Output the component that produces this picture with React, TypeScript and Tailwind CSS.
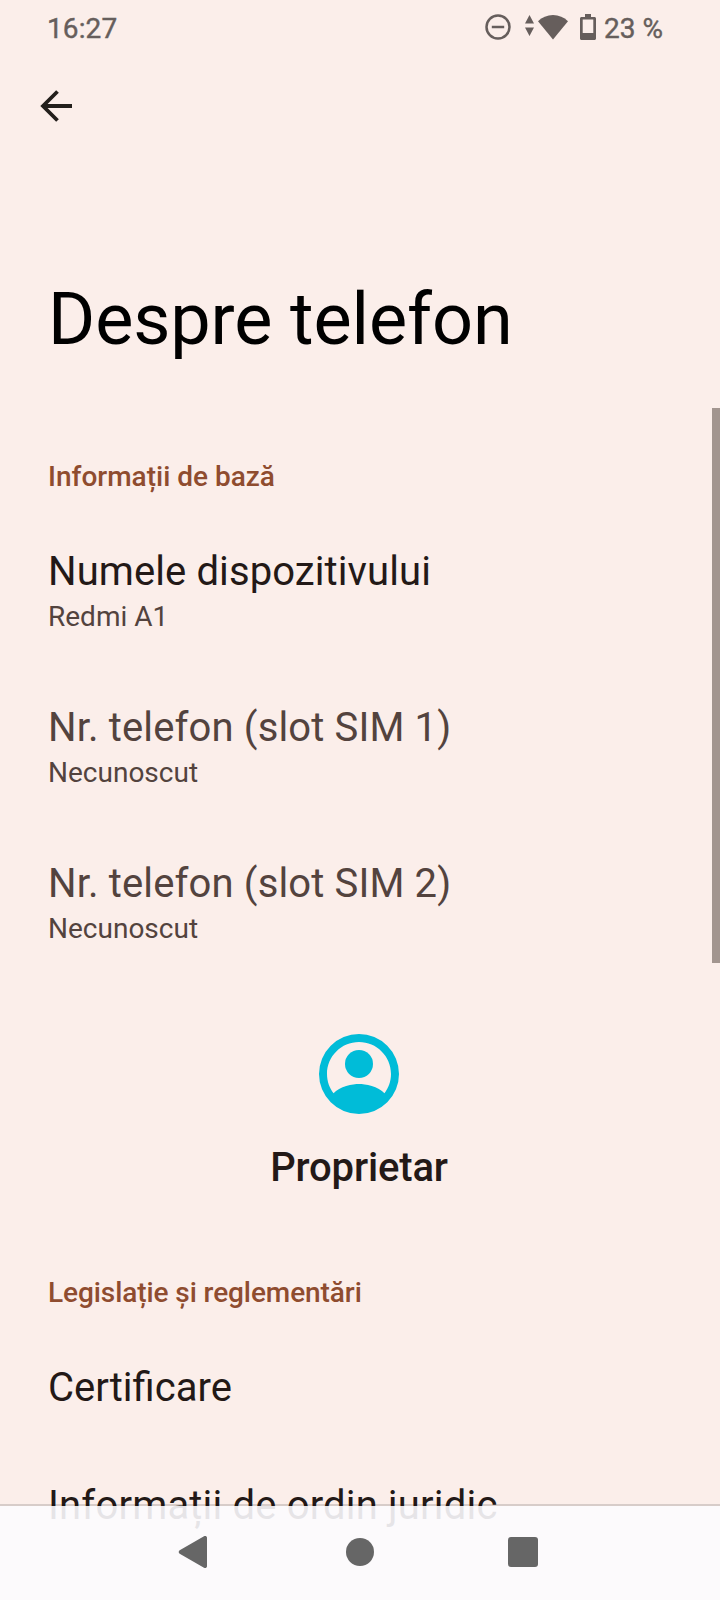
import React from 'react';

interface PreferenceProps {
  title: string;
  summary?: string;
  disabled?: boolean;
  titleClass?: string;
}

const Preference: React.FC<PreferenceProps> = ({
  title,
  summary,
  disabled = false,
  titleClass = 'tracking-[0.1px]'
}) => (
  <div>
    <div
      className={`text-[40px] leading-[48px] whitespace-nowrap ${titleClass} ${
        disabled ? 'text-[#53433e]' : 'text-[#231917]'
      }`}
    >
      {title}
    </div>
    {summary && <div className="text-[28px] leading-[42px] text-[#53433e]">{summary}</div>}
  </div>
);

const Category: React.FC<{ title: string; className?: string }> = ({ title, className = '' }) => (
  <h2 className={`text-[28px] leading-9 font-medium text-[#8f4c2f] ${className}`}>{title}</h2>
);

const StatusBar = () => (
  <header className="flex h-[54px] shrink-0 items-center justify-between pr-[57px] pl-[47px] text-[28px] leading-9 text-[#665e5c]">
    <span className="pt-1 tracking-[0.1px] [-webkit-text-stroke:0.4px_#665e5c]">16:27</span>
    <div className="flex items-center">
      <svg width="26" height="26" viewBox="0 0 26 26" fill="none" stroke="currentColor">
        <circle cx="13" cy="13" r="11.5" strokeWidth="2.5" />
        <path d="M6.8 13h12.4" strokeWidth="2.5" />
      </svg>
      {/* wifi with activity arrows */}
      <svg className="ml-[14px]" width="44" height="26" viewBox="0 0 44 26" fill="currentColor">
        <path d="M0 9.5L4.5 1 9 9.5zM0 13.5h9L4.5 22z" />
        <path d="M28 25.5L13 7.2C17 3.3 22.2 1 28 1s11 2.3 15 6.2z" />
      </svg>
      <svg className="ml-[11px]" width="16" height="26" viewBox="0 0 16 26" fill="currentColor">
        <path
          fillRule="evenodd"
          d="M5 0h6v3h3.5c.8 0 1.5.7 1.5 1.500v20c0 .8-.7 1.500-1.500 1.500h-13C.7 26 0 25.300 0 24.500v-20C0 3.700.7 3 1.500 3H5zM2.700 5.500V19h10.600V5.500z"
        />
      </svg>
      <span className="ml-2 pt-1 [-webkit-text-stroke:0.4px_#665e5c]">23 %</span>
    </div>
  </header>
);

const NavigationBar = () => (
  <nav className="absolute inset-x-0 bottom-0 h-24">
    <div className="h-0.5 bg-black/14" />
    <div className="flex h-[94px] items-start bg-[#fcfbfe]/90 text-[#666666]">
      <svg className="mt-[29px] ml-[178px]" width="30" height="34" viewBox="0 0 30 34" fill="currentColor">
        <path d="M1.700 15.200L26 1.300c1.300-.7 3 0 3 1.500v28.400c0 1.500-1.700 2.200-3 1.500L1.700 18.800c-1.300-.8-1.300-2.800 0-3.600z" />
      </svg>
      <div className="mt-8 ml-[138px] h-7 w-7 rounded-full bg-[#666666]" />
      <div className="mt-[31px] ml-[134px] h-[30px] w-[30px] rounded-[3px] bg-[#666666]" />
    </div>
  </nav>
);

export default function App() {
  return (
    <div className="relative flex h-[1600px] w-[720px] flex-col overflow-hidden bg-[#fbeeea] font-['Roboto',sans-serif]">
      <StatusBar />

      <div className="h-[102px] shrink-0 pt-9 pl-10">
        <svg width="32" height="32" viewBox="0 0 32 32" fill="none" stroke="#231f1c" strokeWidth="3.800">
          <path d="M32 16H3M17.500 1.500L3 16l14.500 14.500" />
        </svg>
      </div>

      <h1 className="mt-[122px] pl-12 text-[72px] leading-[84px] tracking-[-0.1px] text-black">
        Despre telefon
      </h1>

      <main className="mt-[97px] flex flex-col px-12">
        <Category title="Informații de bază" />
        <div className="mt-[53px] flex flex-col gap-[66px]">
          <Preference title="Numele dispozitivului" summary="Redmi A1" />
          <Preference
            title="Nr. telefon (slot SIM 1)"
            summary="Necunoscut"
            titleClass="tracking-[0.14px]"
            disabled
          />
          <Preference
            title="Nr. telefon (slot SIM 2)"
            summary="Necunoscut"
            titleClass="tracking-[0.14px]"
            disabled
          />
        </div>

        {/* Owner */}
        <div className="mt-[76px] mb-[83px] flex flex-col items-center">
          <svg className="mr-0.5" width="96" height="96" viewBox="0 0 24 24" fill="#00bcd8">
            <path
              fillRule="evenodd"
              d="M12 2a10 10 0 1 0 0 20 10 10 0 0 0 0-20zM5.640 16.830C4.620 15.490 4 13.820 4 12c0-4.410 3.590-8 8-8s8 3.590 8 8c0 1.820-.62 3.490-1.640 4.830-1.430-1.740-4.900-2.330-6.360-2.330s-4.930.59-6.360 2.330z"
            />
            <circle cx="12" cy="9.500" r="3.500" />
          </svg>
          <div className="mt-[22px] mr-0.5 text-[40px] leading-[48px] font-medium tracking-[-0.14px] text-[#231917]">
            Proprietar
          </div>
        </div>

        <Category title="Legislație și reglementări" className="tracking-[-0.08px]" />
        <div className="mt-[53px] flex flex-col gap-[70px]">
          <Preference title="Certificare" titleClass="tracking-normal" />
          <Preference title="Informații de ordin juridic" titleClass="tracking-[0.18px]" />
        </div>
      </main>

      {/* Scrollbar */}
      <div className="absolute top-[408px] right-0 h-[555px] w-2 bg-[#a2958f]" />

      <NavigationBar />
    </div>
  );
}
